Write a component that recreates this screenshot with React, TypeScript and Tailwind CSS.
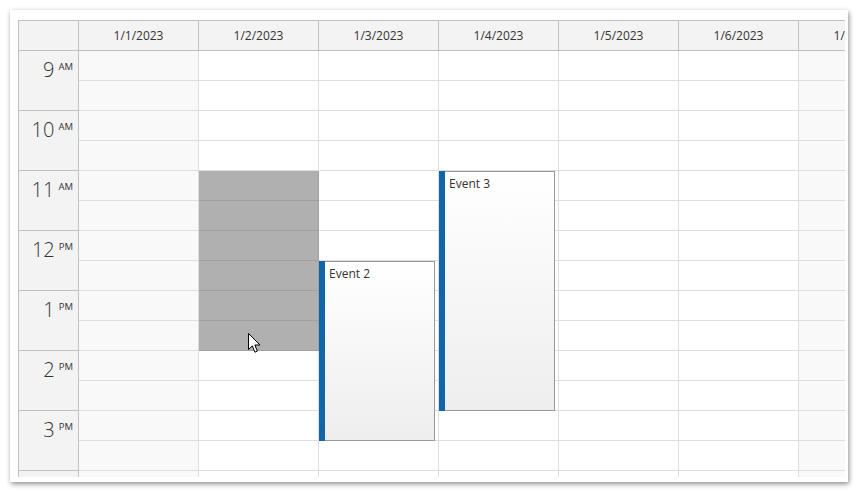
import React from 'react'

const DAYS = ['1/1/2023', '1/2/2023', '1/3/2023', '1/4/2023', '1/5/2023', '1/6/2023', '1/7/2023']
const HOURS: { h: string; ap: string }[] = [
  { h: '9', ap: 'AM' },
  { h: '10', ap: 'AM' },
  { h: '11', ap: 'AM' },
  { h: '12', ap: 'PM' },
  { h: '1', ap: 'PM' },
  { h: '2', ap: 'PM' },
  { h: '3', ap: 'PM' },
  { h: '', ap: '' }, // 4 PM row, only its top edge is visible
]

type Ev = { day: number; text: string; top: number; height: number }

const EVENTS: Ev[] = [
  { day: 2, text: 'Event 2', top: 210, height: 180 },
  { day: 3, text: 'Event 3', top: 120, height: 240 },
]

const font = { fontFamily: '"Open Sans", "Noto Sans", sans-serif' }

const Cursor: React.FC = () => (
  <svg width="14" height="21" viewBox="0 0 14 21" className="absolute left-[229px] top-[282px]">
    <path
      d="M0.5 0.5 L0.5 16.5 L4.3 12.9 L6.9 19.2 L9.4 18.1 L6.8 12 L12 12 Z"
      fill="#fff"
      stroke="#000"
      strokeWidth="1"
      strokeLinejoin="round"
    />
  </svg>
)

const App: React.FC = () => {
  return (
    <div className="w-[860px] h-[493px] bg-white p-[10px]" style={font}>
      <div className="w-[838px] h-[472px] bg-white pt-[10px] pl-[8px] shadow-[1px_2px_5px_rgba(0,0,0,0.45)]">
        <div className="w-[827px] h-[457px] overflow-hidden border-l border-t border-[#c0c0c0] text-[#333]">
          {/* Header */}
          <div className="flex h-[30px] bg-[#f3f3f3]">
            <div className="w-[60px] shrink-0 border-r border-b border-[#c0c0c0]" />
            {DAYS.map(d => (
              <div
                key={d}
                className="w-[120px] shrink-0 border-r border-b border-[#c0c0c0] flex items-center justify-center text-[12px]"
              >
                {d}
              </div>
            ))}
          </div>

          {/* Body */}
          <div className="flex relative">
            <div className="w-[60px] shrink-0 bg-[#f3f3f3]">
              {HOURS.map((r, i) => (
                <div
                  key={i}
                  className="h-[60px] border-r border-b border-[#c0c0c0] flex justify-end items-start pr-[5px]"
                >
                  <span className="text-[20px] font-light leading-none pt-[9px]">{r.h}</span>
                  <span className="text-[9.5px] leading-none pt-[11px] ml-[4px]">{r.ap}</span>
                </div>
              ))}
            </div>

            {DAYS.map((d, di) => {
              const weekend = di === 0 || di === 6
              return (
                <div key={d} className="w-[120px] shrink-0 relative">
                  {Array.from({ length: 16 }).map((_, ci) => {
                    const selected = di === 1 && ci >= 4 && ci <= 9
                    return (
                      <div
                        key={ci}
                        className={`h-[30px] border-r border-b ${
                          selected
                            ? 'bg-[#b0b0b0] border-[#a0a0a0]'
                            : weekend
                            ? 'bg-[#f9f9f9] border-[#dedede]'
                            : 'bg-white border-[#dedede]'
                        }`}
                      />
                    )
                  })}
                  {EVENTS.filter(e => e.day === di).map(e => (
                    <div
                      key={e.text}
                      className="absolute left-0 w-[116px] flex border border-l-0 border-[#999] bg-gradient-to-b from-white to-[#eeeeee]"
                      style={{ top: e.top, height: e.height }}
                    >
                      <div className="w-[6px] shrink-0 bg-[#1066a8] -my-px" />
                      <div className="pl-[4px] pt-[4px] text-[12px] leading-[16px] text-[#333]">{e.text}</div>
                    </div>
                  ))}
                </div>
              )
            })}
            <Cursor />
          </div>
        </div>
      </div>
    </div>
  )
}

export default App
